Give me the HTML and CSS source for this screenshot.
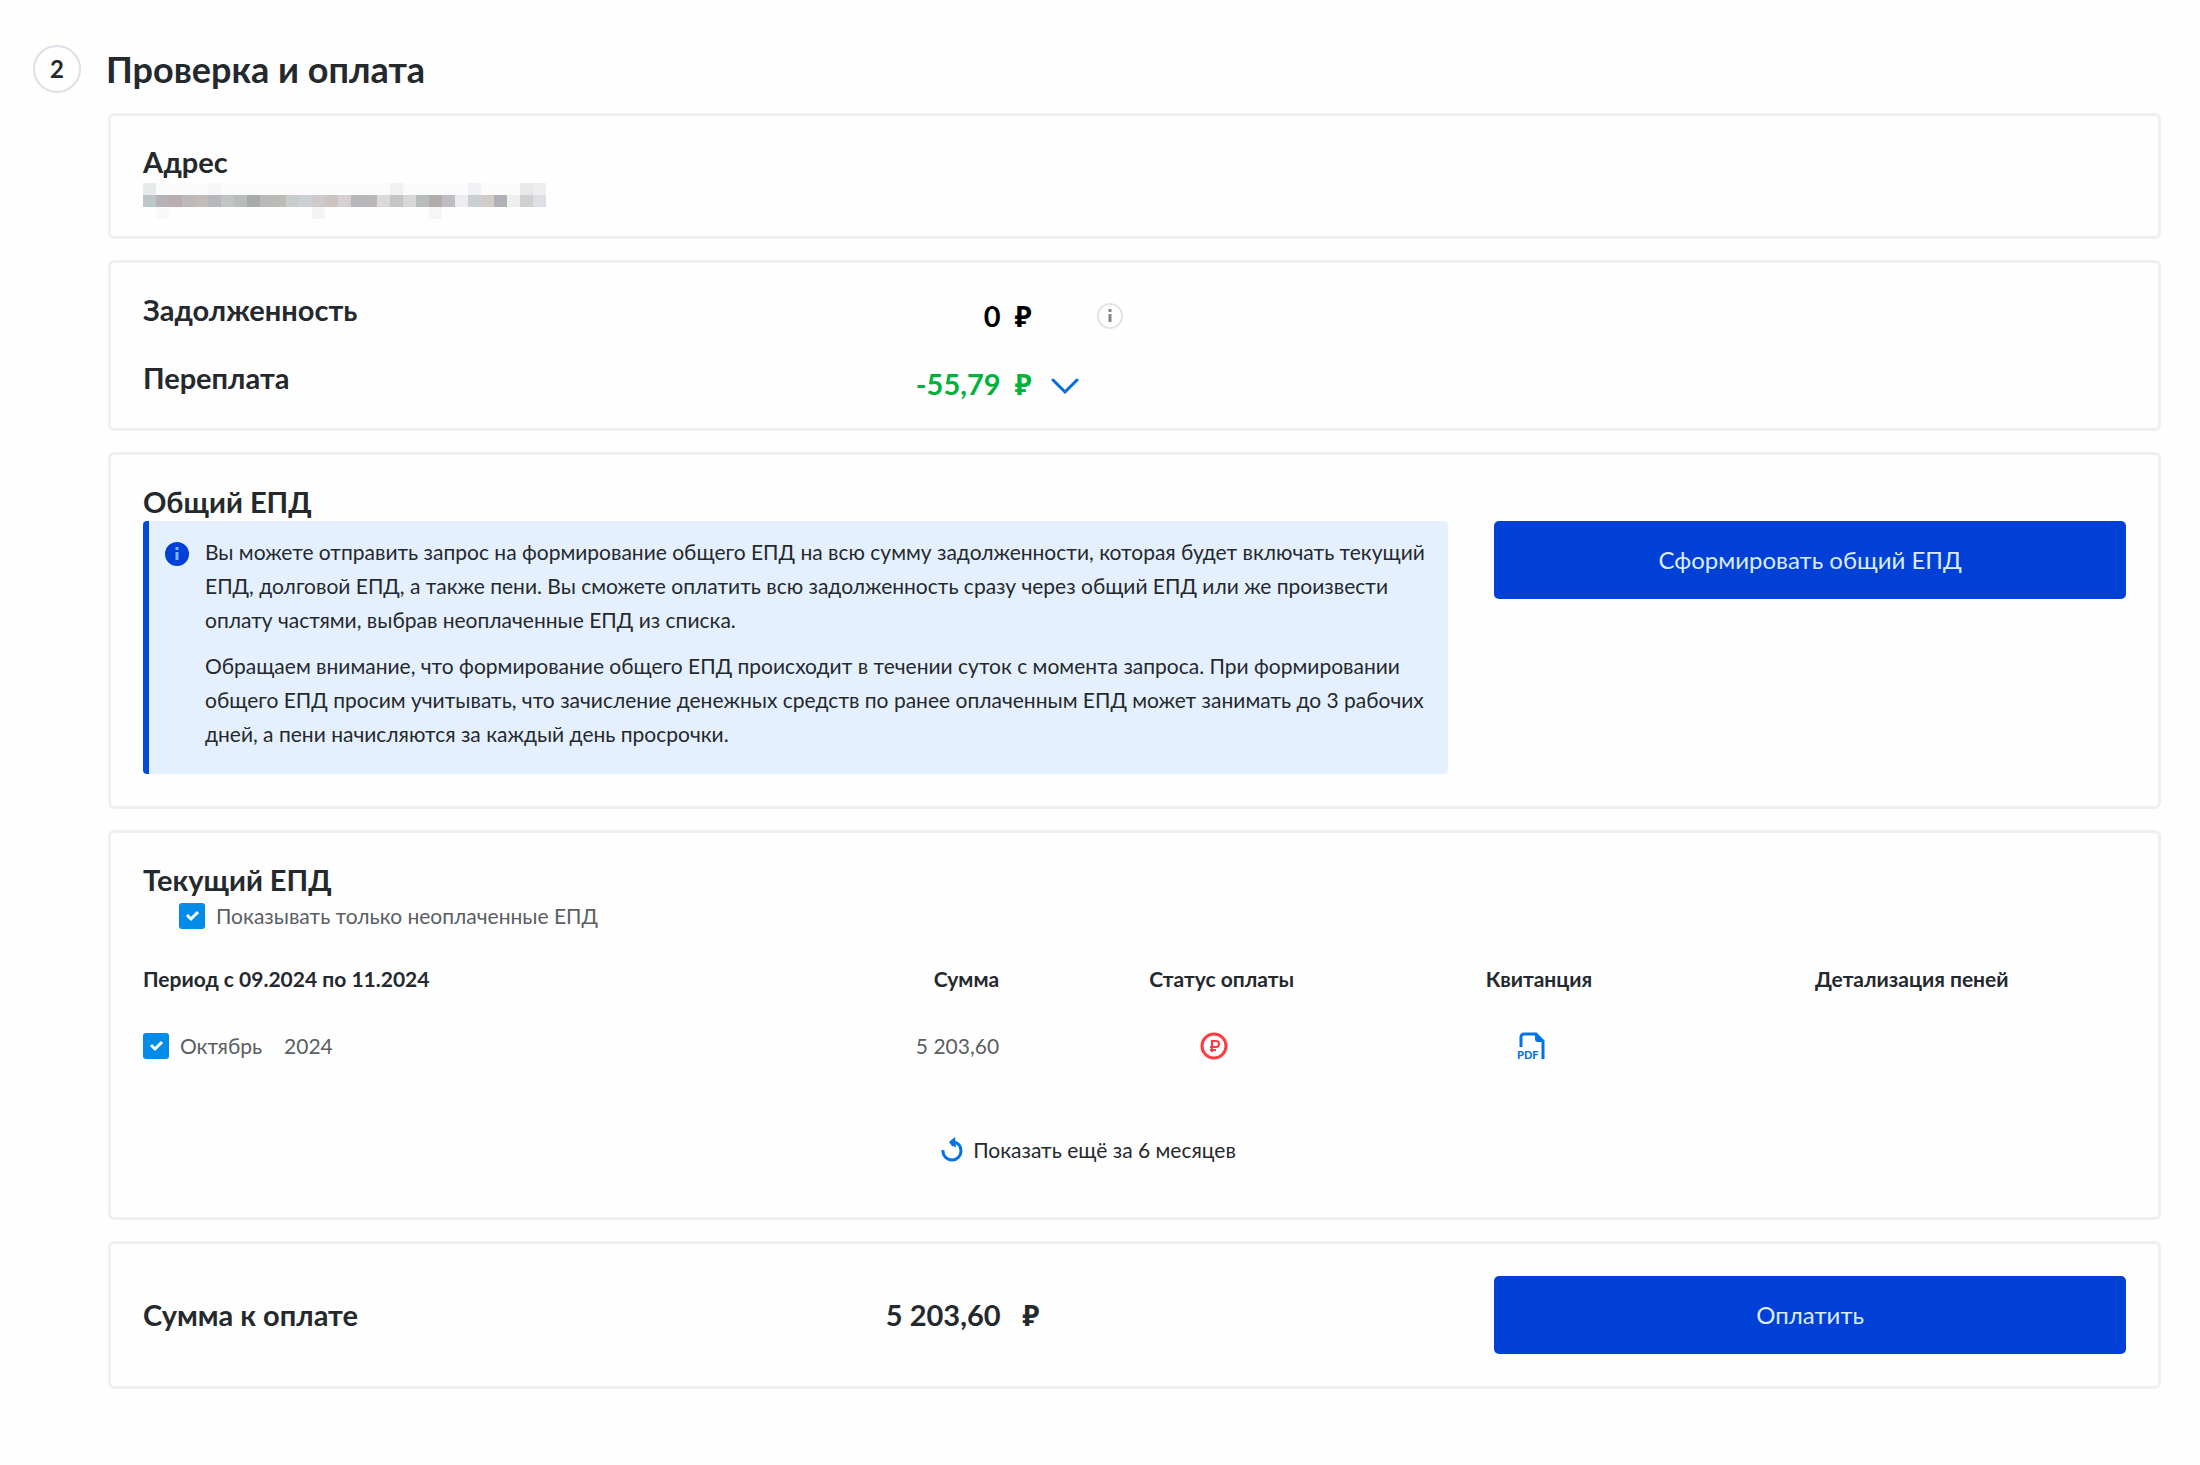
FILE: index.html
```html
<!DOCTYPE html>
<html lang="ru">
<head>
<meta charset="utf-8">
<meta name="viewport" content="width=device-width, initial-scale=1">
<title>Проверка и оплата</title>
<link rel="stylesheet" href="styles.css">
</head>
<body>
<main class="step">
  <header class="step-head">
    <span class="step-number">2</span>
    <h1 class="step-title">Проверка и оплата</h1>
  </header>

  <div class="cards">
    <section class="card card-address">
      <h2 class="card-title">Адрес</h2>
      <svg class="address-mask" viewBox="0 0 31 3" preserveAspectRatio="none" shape-rendering="crispEdges" role="img" aria-label="Адрес скрыт">
        <g fill="#fbfbfb"><rect width="31" height="1"/></g>
        <rect x="0" width="1" height="1" fill="#e6eaea"/><rect x="5" width="1" height="1" fill="#f7f7f9"/><rect x="19" width="1" height="1" fill="#f3f0f2"/><rect x="25" width="1" height="1" fill="#eff1f4"/><rect x="29" width="1" height="1" fill="#e8e8e8"/><rect x="30" width="1" height="1" fill="#eeeef0"/>
        <rect x="0" y="1" width="1" height="1" fill="#bcc5c8"/><rect x="1" y="1" width="1" height="1" fill="#b6b2b5"/><rect x="2" y="1" width="1" height="1" fill="#b9adb3"/><rect x="3" y="1" width="1" height="1" fill="#bfb8b9"/><rect x="4" y="1" width="1" height="1" fill="#c2bcb9"/><rect x="5" y="1" width="1" height="1" fill="#b5b7bd"/><rect x="6" y="1" width="1" height="1" fill="#c0c4c3"/><rect x="7" y="1" width="1" height="1" fill="#babcbb"/><rect x="8" y="1" width="1" height="1" fill="#a5acab"/><rect x="9" y="1" width="1" height="1" fill="#b9b9b9"/><rect x="10" y="1" width="1" height="1" fill="#bdbbb8"/><rect x="11" y="1" width="1" height="1" fill="#c8cccd"/><rect x="12" y="1" width="1" height="1" fill="#c9d1d5"/><rect x="13" y="1" width="1" height="1" fill="#cecacb"/><rect x="14" y="1" width="1" height="1" fill="#cdc4c1"/><rect x="15" y="1" width="1" height="1" fill="#d5d1d1"/><rect x="16" y="1" width="1" height="1" fill="#b6b7ba"/><rect x="17" y="1" width="1" height="1" fill="#bbb7b6"/><rect x="18" y="1" width="1" height="1" fill="#d9d9dc"/><rect x="19" y="1" width="1" height="1" fill="#c7c4c7"/><rect x="20" y="1" width="1" height="1" fill="#d7d7d5"/><rect x="21" y="1" width="1" height="1" fill="#b7bdbb"/><rect x="22" y="1" width="1" height="1" fill="#b2adac"/><rect x="23" y="1" width="1" height="1" fill="#bfbdc3"/><rect x="24" y="1" width="1" height="1" fill="#eeecee"/><rect x="25" y="1" width="1" height="1" fill="#c9cfd2"/><rect x="26" y="1" width="1" height="1" fill="#d1ccc8"/><rect x="27" y="1" width="1" height="1" fill="#aeb2b8"/><rect x="28" y="1" width="1" height="1" fill="#eeeeec"/><rect x="29" y="1" width="1" height="1" fill="#d0d0d0"/><rect x="30" y="1" width="1" height="1" fill="#dce0e4"/>
        <rect x="1" y="2" width="1" height="1" fill="#f8faf9"/><rect x="13" y="2" width="1" height="1" fill="#f5f3f5"/><rect x="22" y="2" width="1" height="1" fill="#f6f6f5"/>
      </svg>
    </section>

    <section class="card card-balance">
      <div class="balance-row">
        <h2 class="card-title">Задолженность</h2>
        <p class="amount">0</p>
        <div class="amount-extra">
          <span class="currency">₽</span>
          <button class="icon-button info-button" type="button" aria-label="Подробнее о задолженности">
            <svg width="26" height="26" viewBox="0 0 26 26" fill="none"><circle cx="13" cy="13" r="12" stroke="#e1e4e8" stroke-width="2"/><path d="M13 6v3M13 11v8" stroke="#858585" stroke-width="3"/></svg>
          </button>
        </div>
      </div>
      <div class="balance-row overpaid">
        <h2 class="card-title">Переплата</h2>
        <p class="amount">-55,79</p>
        <div class="amount-extra">
          <span class="currency">₽</span>
          <button class="icon-button" type="button" aria-label="Показать детали переплаты">
            <svg width="28" height="24" viewBox="0 0 28 24" fill="none"><path d="M2 8l12 12L26 8" stroke="#006be3" stroke-width="3" stroke-linecap="round"/></svg>
          </button>
        </div>
      </div>
    </section>

    <section class="card card-general">
      <h2 class="card-title">Общий ЕПД</h2>
      <div class="split">
        <div class="notice">
          <svg class="notice-icon" width="24" height="24" viewBox="0 0 24 24"><circle cx="12" cy="12" r="12" fill="#0040d6"/><path d="M12 5v3M12 10v8" stroke="#7db4ff" stroke-width="3"/></svg>
          <div class="notice-text">
            <p>Вы можете отправить запрос на формирование общего ЕПД на всю сумму задолженности, которая будет включать текущий ЕПД, долговой ЕПД, а также пени. Вы сможете оплатить всю задолженность сразу через общий ЕПД или же произвести оплату частями, выбрав неоплаченные ЕПД из списка.</p>
            <p>Обращаем внимание, что формирование общего ЕПД происходит в течении суток с момента запроса. При формировании общего ЕПД просим учитывать, что зачисление денежных средств по ранее оплаченным ЕПД может занимать до 3 рабочих дней, а пени начисляются за каждый день просрочки.</p>
          </div>
        </div>
        <button class="button" type="button">Сформировать общий ЕПД</button>
      </div>
    </section>

    <section class="card card-current">
      <h2 class="card-title">Текущий ЕПД</h2>
      <label class="check filter"><input class="checkbox" type="checkbox" checked>Показывать только неоплаченные ЕПД</label>
      <table class="bills">
        <thead>
          <tr>
            <th class="col-period" scope="col">Период с 09.2024 по 11.2024</th>
            <th class="col-sum" scope="col">Сумма</th>
            <th class="col-status" scope="col">Статус оплаты</th>
            <th class="col-receipt" scope="col">Квитанция</th>
            <th class="col-details" scope="col">Детализация пеней</th>
          </tr>
        </thead>
        <tbody>
          <tr>
            <td class="col-period"><label class="check"><input class="checkbox" type="checkbox" checked><span class="month">Октябрь</span><span>2024</span></label></td>
            <td class="col-sum">5 203,60</td>
            <td class="col-status icon-cell">
              <svg width="28" height="28" viewBox="0 0 28 28" fill="none" stroke="#ff3b41" role="img" aria-label="Не оплачено"><circle cx="14" cy="14" r="12" stroke-width="3"/><path d="M12 20V9h4a3 3 0 0 1 0 6h-6M10 18h6" stroke-width="2"/></svg>
            </td>
            <td class="col-receipt icon-cell">
              <button class="icon-button" type="button" aria-label="Квитанция в PDF">
                <svg width="28" height="28" viewBox="0 0 28 28" fill="none"><path d="M4 15V5a3 3 0 0 1 3-3h12l7 7v18" stroke="#0073e6" stroke-width="3"/><path d="M18 1l9 9h-6a3 3 0 0 1-3-3z" fill="#0073e6"/><text class="pdf-mark" x="0" y="27">PDF</text></svg>
              </button>
            </td>
            <td class="col-details"></td>
          </tr>
        </tbody>
      </table>
      <button class="more" type="button">
        <svg width="22" height="26" viewBox="0 0 22 26" fill="none"><path d="M2 13a9 9 0 0 0 9 10a9 9 0 0 0 9-9c0-5-3-8-7-9" stroke="#0073e6" stroke-width="3"/><path d="M14 0l1 10-4-1-3-4z" fill="#0073e6"/></svg>
        Показать ещё за 6 месяцев
      </button>
    </section>

    <section class="card card-total">
      <div class="split">
        <div class="total">
          <h2 class="card-title">Сумма к оплате</h2>
          <p class="amount">5 203,60</p>
          <span class="currency">₽</span>
        </div>
        <button class="button" type="button">Оплатить</button>
      </div>
    </section>
  </div>
</main>
</body>
</html>
```
FILE: styles.css
```css
* {
  box-sizing: border-box;
}

body {
  margin: 0;
  background: #fefefe;
  color: #24292d;
  font: 21px/34px Lato, "Noto Sans", sans-serif;
}

h1,
h2,
p {
  margin: 0;
}

button {
  font: inherit;
  color: inherit;
  border: 0;
  background: none;
  padding: 0;
  cursor: pointer;
}

svg {
  display: block;
}

.step {
  padding: 45px 39px 74px 33px;
}

.step-head {
  display: flex;
  align-items: center;
  gap: 25px;
}

.step-number {
  width: 48px;
  height: 48px;
  border: 2px solid #dbe1e5;
  border-radius: 50%;
  font-size: 24px;
  font-weight: 700;
  line-height: 44px;
  text-align: center;
}

.step-title {
  font-size: 36px;
  line-height: 48px;
}

.cards {
  display: flex;
  flex-direction: column;
  gap: 21px;
  margin: 20px 0 0 75px;
}

.card {
  border: 3px solid #f0f0f0;
  border-radius: 6px;
  padding: 30px 32px 32px;
}

.card-title {
  font-size: 29px;
  line-height: 34px;
}

.card-address {
  padding: 29px 32px 17px;
}

.address-mask {
  width: 403px;
  height: 36px;
  margin-top: 4px;
}

.card-balance {
  display: grid;
  gap: 34px;
  padding-bottom: 33px;
}

.balance-row {
  display: grid;
  grid-template-columns: 100fr 73fr 227fr;
}

.amount {
  font-size: 29px;
  font-weight: 700;
  line-height: 34px;
  text-align: right;
}

.currency {
  font-family: "Open Sans", "Noto Sans", sans-serif;
  font-size: 28px;
  font-weight: 700;
}

.balance-row .amount,
.amount-extra {
  margin-top: 6px;
  margin-bottom: -6px;
  color: #000;
}

.amount-extra {
  display: flex;
  align-items: center;
  gap: 20px;
  padding-left: 14px;
}

.overpaid .amount,
.overpaid .amount-extra {
  color: #00b23c;
}

.info-button {
  margin-left: 46px;
}

.split {
  display: grid;
  grid-template-columns: 31fr 15fr;
  gap: 46px;
  align-items: start;
}

.card-general .split {
  margin-top: 2px;
}

.notice {
  display: flex;
  gap: 16px;
  padding: 14px 16px 23px;
  border-left: 6px solid #004cd8;
  border-radius: 4px;
  background: #e5f0ff;
}

.notice-icon {
  flex: none;
  margin-top: 7px;
}

.notice-text {
  display: grid;
  gap: 12px;
}

.button {
  height: 78px;
  border-radius: 5px;
  background: #0040d6;
  color: #dcebff;
  font-size: 24px;
}

.card-current {
  display: flex;
  flex-direction: column;
  padding-bottom: 50px;
}

.check {
  display: flex;
  align-items: center;
  gap: 11px;
  color: #5a5f63;
}

.filter {
  margin: 2px 0 0 36px;
}

.checkbox {
  appearance: none;
  flex: none;
  width: 26px;
  height: 26px;
  margin: 0;
  border-radius: 3px;
  background: #008ce8 url("data:image/svg+xml,%3Csvg xmlns='http://www.w3.org/2000/svg' viewBox='0 0 26 26' fill='none' stroke='white' stroke-width='3'%3E%3Cpath d='M8 12l4 4 7-7'/%3E%3C/svg%3E");
}

.month {
  margin-right: 11px;
}

.bills {
  width: 100%;
  margin-top: 29px;
  border-collapse: collapse;
  table-layout: fixed;
}

.bills th,
.bills td {
  padding: 0 0 33px;
}

.bills td {
  color: #5a5f63;
}

.bills .col-period {
  width: 32.4%;
  text-align: left;
}

.bills .col-sum {
  width: 14%;
  padding-right: 64px;
  text-align: right;
}

.bills .col-status,
.bills .col-receipt {
  width: 16%;
}

.bills .icon-cell {
  padding-right: 16px;
}

.icon-cell svg,
.icon-cell .icon-button {
  display: block;
  margin: 0 auto;
}

.pdf-mark {
  fill: #0073e6;
  font-size: 11px;
  font-weight: 900;
}

.more {
  display: flex;
  align-items: center;
  align-self: center;
  gap: 10px;
  margin: 37px 92px 0 0;
}

.card-total {
  padding-top: 32px;
}

.card-total .split {
  align-items: center;
}

.total {
  display: grid;
  grid-template-columns: 400fr 458fr 448fr;
}

.total .currency {
  padding-left: 22px;
}
```
